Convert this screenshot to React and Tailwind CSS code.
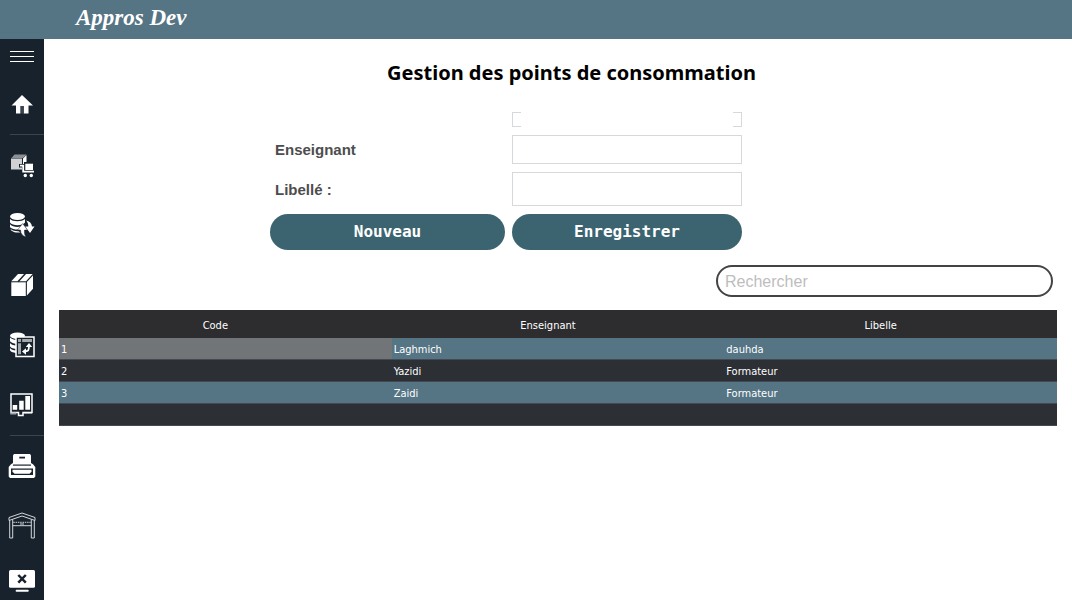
import React from "react";

const DARK = "#18222c";

function Icon({ children }) {
  return (
    <svg className="h-7 w-7 shrink-0" viewBox="0 0 28 28" fill="#fff" aria-hidden="true">
      {children}
    </svg>
  );
}

const icons = {
  home: (
    <Icon>
      <path d="M14 4 25 14.500h-4.500v8H15.700V15h-3.200v7.500H8v-8H3.500z" />
      <path d="M12.700 15h3v7.500h-3z" fill="#3a434c" />
    </Icon>
  ),
  supply: (
    <Icon>
      <path d="M3.500 7 6.500 3.500H18.500L15 7z" fill="#8b9096" />
      <path d="M3 7.500h11v11H3z" fill="#cfd1d4" />
      <path d="M15 7.500 18.500 4v7h-2.500v3h-1z" />
      <path d="M11 13h5v-1.500h10v10H14v-5h-3z" fill={DARK} />
      <path d="M12 14.700h3.200v6H26" fill="none" stroke="#fff" strokeWidth="1.800" />
      <path d="M17.300 12.700h7.700v6.300h-7.700z" />
      <circle cx="17.300" cy="24.500" r="1.700" />
      <circle cx="23.300" cy="24.500" r="1.700" />
    </Icon>
  ),
  stockFlow: (
    <Icon>
      <ellipse cx="9.500" cy="5.500" rx="7.500" ry="3.500" />
      <path d="M2 8c2.500 3 12 3 15 0v3.500c-2.500 3.500-12.500 3.500-15 0z" />
      <path d="M2 13.200c2.500 2.800 8 3.300 11 2l-2 3.300c-3 .300-7-.300-9-2.300z" />
      <path d="M2.500 18c2 1.700 5 2.300 8 2.200l2 1.300c-4 .500-9-.500-10-3.500z" />
      <path d="M14.700 12.500 19.500 19h-3c-.300 3 .200 5 1.500 7-3.500-1-5.500-3.500-5.500-7H9.500z" stroke={DARK} strokeWidth=".5" />
      <path d="M18 9.500c3.500.500 5.700 2.500 6 6H26.500L22 22l-4.700-6.500h3c0-2.500-.500-4.500-2.300-6z" />
    </Icon>
  ),
  box: (
    <Icon>
      <path d="M3.300 10.300 10 3h14.700L18 10.300z" />
      <path d="M3.300 11.300h14.500V25H3.300z" />
      <path d="M18.900 11 25 4.500v13.300l-6.100 6.700z" />
      <path d="m10 10.800 7.300-8" stroke={DARK} strokeWidth="1.500" />
    </Icon>
  ),
  stockTable: (
    <Icon>
      <ellipse cx="9.500" cy="4.700" rx="7.500" ry="3.200" />
      <path d="M2 6.500c2 2 5 2.500 8 2.500v4c-3 0-7-1-8-3z" />
      <path d="M2 12c1 1.500 3 2.200 6 2.500v3.500c-3-.300-6-1.500-6-3z" />
      <path d="M2 17c1 1.500 3 2.200 6 2.500v2.500c-3-.300-6-1.500-6-3z" />
      <path d="M8 6h18v19.500H8z" fill={DARK} stroke="#fff" strokeWidth="1.500" />
      <path d="M10 8h3v3h-3zM14.200 8H24v3h-9.800zM10 12.200h3v11h-3z" fill="#a3a8ad" />
      <path d="M16 20.500c4.500 0 5-1 5-6" fill="none" stroke="#fff" strokeWidth="1.700" />
      <path d="m17.800 16 3.200-4 3.200 4zM18 17.300l-4 3.200 4 3.200z" />
    </Icon>
  ),
  chart: (
    <Icon>
      <path d="M3 21.500V3h21v18.500h-9v3h-4.500v-3z" fill="none" stroke="#fff" strokeWidth="1.500" />
      <path d="M2.300 21.500h6v2h-6z" fill="#a3a8ad" />
      <path d="M15.500 21.700H24" stroke="#fff" strokeWidth="1.500" />
      <path d="M4.700 14h4.500v4.700H4.700zM11.200 9.700h4.500v9h-4.500zM17.300 5H22v13.700h-4.700z" />
    </Icon>
  ),
  register: (
    <Icon>
      <path d="M6 2h16l1 1.500V11l2 1.300 2.300 2.700V24.500L26 26H2L.7 24.500V15L3 12.300 5 11V3.500z" />
      <path d="M11.300 4.700H17v1.800h-5.700z" fill={DARK} />
      <path d="M5 12.500h18v1.200H5z" fill={DARK} />
      <path d="M3 16.500h22V23H3z" fill={DARK} />
      <path d="M4.500 17.700h19v2L21.500 21.700h-15l-2-2z" />
    </Icon>
  ),
  warehouse: (
    <Icon>
      <g fill="none" stroke="#e8eaec" strokeWidth=".9">
        <path d="M1 5.500 14 1l13 4.500v3L14 4 1 8.500z" />
        <path d="M1.700 8.500V26h3V7.500M23.300 7.500V26h3V8.500" />
        <path d="M4.700 13.700h18.600" />
        <path d="M5.300 10.300h17.400" strokeDasharray="1.500 .8" />
        <path d="M12 12h4" />
      </g>
    </Icon>
  ),
  close: (
    <Icon>
      <rect x="1" y="4" width="26" height="17.700" rx="1.500" />
      <path d="m10.300 9 7.500 7.700m0-7.700-7.500 7.700" stroke={DARK} strokeWidth="2.500" />
      <rect x="7.700" y="23.800" width="13" height="2" rx=".8" />
    </Icon>
  ),
};

function NavButton({ label, icon, className = "h-15" }) {
  return (
    <button type="button" aria-label={label} className={`flex w-full shrink-0 items-center justify-center ${className}`}>
      {icon}
    </button>
  );
}

const Separator = () => <div className="ml-2.5 h-px shrink-0 bg-[#3b444d]" />;

const rows = [
  ["1", "Laghmich", "dauhda"],
  ["2", "Yazidi", "Formateur"],
  ["3", "Zaidi", "Formateur"],
  ["", "", ""],
];

const labelClass = "self-center pt-px pl-[5px] text-[15px] leading-5 font-bold text-[#4d4d4d]";
const fieldClass = "block w-full border border-[#d6d8dc] bg-white px-2 text-sm outline-none";
const actionClass =
  "h-9 rounded-full bg-[#3b6470] font-['DejaVu_Sans_Mono',monospace] text-base font-bold text-white";

export default function App() {
  return (
    <div className="flex min-h-screen flex-col bg-white font-['Liberation_Sans',Arial,sans-serif]">
      <header className="flex h-[39px] items-center bg-[#557484] pb-1 pl-[76px]">
        <span className="font-['Liberation_Serif',serif] text-[23px] leading-8 font-bold text-white italic">
          Appros Dev
        </span>
      </header>
      <div className="flex flex-1">
        <nav className="flex w-11 shrink-0 flex-col bg-[#18222c]">
          <button type="button" aria-label="Menu" className="flex h-9 flex-col items-center justify-center gap-1 pb-0.5">
            <span className="h-px w-6 bg-white" />
            <span className="h-px w-6 bg-white" />
            <span className="h-px w-6 bg-white" />
          </button>
          <NavButton label="Accueil" icon={icons.home} className="h-[59px]" />
          <Separator />
          <NavButton label="Approvisionnement" icon={icons.supply} />
          <NavButton label="Mouvements" icon={icons.stockFlow} />
          <NavButton label="Articles" icon={icons.box} />
          <NavButton label="Stock" icon={icons.stockTable} />
          <NavButton label="Statistiques" icon={icons.chart} />
          <Separator />
          <NavButton label="Caisse" icon={icons.register} />
          <NavButton label="Magasin" icon={icons.warehouse} />
          <NavButton label="Quitter" icon={icons.close} className="h-11 pt-1" />
        </nav>

        <main className="flex min-w-0 flex-1 flex-col px-[15px] pt-5">
          <h1 className="pl-[27px] text-center font-['Noto_Sans',sans-serif] text-xl leading-7 font-bold text-black">
            Gestion des points de consommation
          </h1>

          <form
            className="mt-[25px] ml-[211px] grid grid-cols-[235px_230px] gap-x-[7px] gap-y-2"
            onSubmit={(e) => e.preventDefault()}
          >
            <div className="relative col-start-2 h-[15px]">
              <input aria-label="Code" readOnly className={`h-full ${fieldClass}`} />
              <span className="absolute inset-y-0 right-[9px] left-[9px] bg-white" />
            </div>
            <label htmlFor="enseignant" className={labelClass}>
              Enseignant
            </label>
            <input id="enseignant" className={`h-[29px] ${fieldClass}`} />
            <label htmlFor="libelle" className={labelClass}>
              Libellé :
            </label>
            <input id="libelle" className={`h-[34px] ${fieldClass}`} />
            <button type="button" className={actionClass}>
              Nouveau
            </button>
            <button type="submit" className={actionClass}>
              Enregistrer
            </button>
          </form>

          <input
            type="text"
            aria-label="Rechercher"
            placeholder="Rechercher"
            className="mt-[15px] mr-1 h-8 w-[337px] self-end rounded-full border-2 border-[#444444] bg-white px-[7px] pt-0.5 text-base outline-none placeholder:text-[#bdbdbd]"
          />

          <table className="mt-[13px] w-full table-fixed border-collapse font-['DejaVu_Sans_Condensed','DejaVu_Sans',sans-serif] text-[11px] text-white">
            <thead>
              <tr className="h-7 bg-[#2d2d2f]">
                <th className="pt-1 pr-5 font-normal">Code</th>
                <th className="pt-1 pr-5 font-normal">Enseignant</th>
                <th className="pt-1 pr-5 font-normal">Libelle</th>
              </tr>
            </thead>
            <tbody>
              {rows.map((row, i) => (
                <tr key={i} className={i % 2 === 0 ? "h-[22px] bg-[#557484]" : "h-[22px] bg-[#2c2f34]"}>
                  {row.map((cell, j) => (
                    <td
                      key={j}
                      className={`px-0.5 py-0 leading-[21px] shadow-[inset_0_-1px_0_#434a53] ${
                        i === 0 && j === 0 ? "bg-[#717578]" : ""
                      }`}
                    >
                      {cell}
                    </td>
                  ))}
                </tr>
              ))}
            </tbody>
          </table>
        </main>
      </div>
    </div>
  );
}
